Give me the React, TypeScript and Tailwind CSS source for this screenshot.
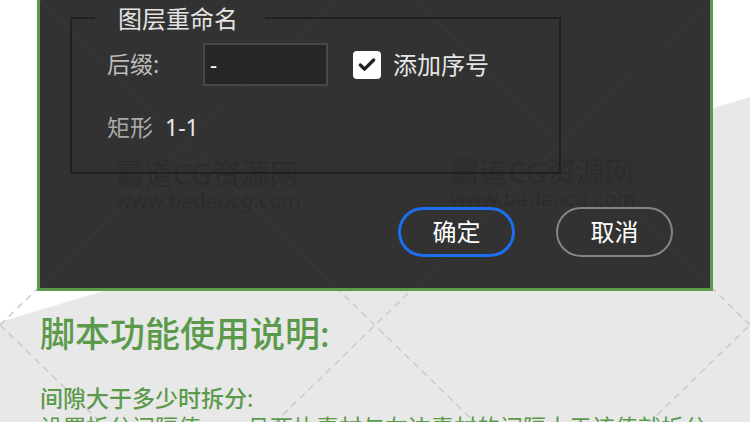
import React from "react";
import { Check } from "lucide-react";

// diamond lattice that runs across the whole page
const LINES: [number, number, number, number][] = [
    [0, 325, 375, -39],
    [188, 507, 750, -39],
    [562, 507, 750, 325],
    [0, -39, 562, 507],
    [375, -39, 750, 325],
    [0, 325, 188, 507],
];

function Lattice({ stroke, dash, width }: { stroke: string; dash?: string; width: number }) {
    return (
        <svg width="750" height="422" viewBox="0 0 750 422" fill="none">
            {LINES.map(([x1, y1, x2, y2], i) => (
                <line key={i} x1={x1} y1={y1} x2={x2} y2={y2} stroke={stroke} strokeWidth={width} strokeDasharray={dash} />
            ))}
        </svg>
    );
}

function Watermark({ className }: { className: string }) {
    return (
        <div className={`absolute pointer-events-none text-[#2c2c2c] ${className}`}>
            <div className="text-[29px] leading-[34px]">霸道CG资源网</div>
            <div className="text-[20px] leading-[20px] tracking-[0.5px]">www.badaocg.com</div>
        </div>
    );
}

export default function App() {
    return (
        <div className="relative w-[750px] h-[422px] overflow-hidden bg-white font-['Noto_Sans','Noto_Sans_CJK_SC',sans-serif]">
            {/* grey slanted backdrop */}
            <div className="absolute inset-0 bg-[#e8e8e8] [clip-path:polygon(0_322px,100%_97px,100%_100%,0_100%)]" />
            <div className="absolute inset-0">
                <Lattice stroke="#cbcbcb" dash="7 5" width={1.5} />
            </div>

            {/* dialog screenshot */}
            <div className="relative ml-[37px] w-[676px] h-[291px] bg-[#323232] border-[3px] border-t-0 border-[#5b9a4b] overflow-hidden">
                <div className="absolute left-[-40px] top-0 pointer-events-none">
                    <Lattice stroke="#3b3b3b" width={1} />
                </div>

                <Watermark className="left-[75px] top-[157px]" />
                <Watermark className="left-[410px] top-[155px]" />

                <div className="relative mt-[17px] ml-[30px] w-[491px] h-[157px] border-2 border-[#212121]">
                    <span className="absolute top-[-15px] left-[23px] pl-[23px] pr-[27px] bg-[#323232] text-[24px] leading-[30px] text-[#e4e4e4]">
                        图层重命名
                    </span>
                    <div className="pl-[35px] pt-[24px]">
                        <div className="flex items-center h-[43px]">
                            <span className="w-[96px] text-[23px] text-[#bdbdbd]">后缀:</span>
                            <div className="w-[125px] h-[43px] bg-[#262626] border-2 border-[#474747] pl-[5px] flex items-center text-[22px] text-white">
                                -
                            </div>
                            <div className="ml-[25px] w-[28px] h-[28px] rounded-[4px] bg-white flex items-center justify-center">
                                <Check className="w-[20px] h-[20px] text-[#222]" strokeWidth={4} />
                            </div>
                            <span className="ml-[12px] text-[24px] text-[#e6e6e6]">添加序号</span>
                        </div>
                        <div className="mt-[26px] flex items-center leading-[30px]">
                            <span className="text-[23px] text-[#a9a9a9]">矩形</span>
                            <span className="ml-[12px] text-[23px] text-[#e8e8e8]">1-1</span>
                        </div>
                    </div>
                </div>

                <div className="relative mt-[33px] pr-[37px] flex justify-end gap-[41px]">
                    <button className="w-[117px] h-[50px] rounded-full border-[3px] border-[#1d6ef0] text-[24px] text-white">
                        确定
                    </button>
                    <button className="w-[117px] h-[50px] rounded-full border-[2.5px] border-[#858585] text-[24px] text-white">
                        取消
                    </button>
                </div>
            </div>

            {/* description */}
            <div className="relative pl-[40px] text-[#5b9a4b]">
                <h2 className="mt-[22px] text-[35px] leading-[42px] font-medium">脚本功能使用说明:</h2>
                <p className="mt-[29px] text-[23px] leading-[29px] font-medium">间隙大于多少时拆分:</p>
                <p className="text-[23px] leading-[29px] whitespace-nowrap">设置拆分间隔值，一旦两片素材与左边素材的间隔大于该值就拆分</p>
            </div>
        </div>
    );
}
